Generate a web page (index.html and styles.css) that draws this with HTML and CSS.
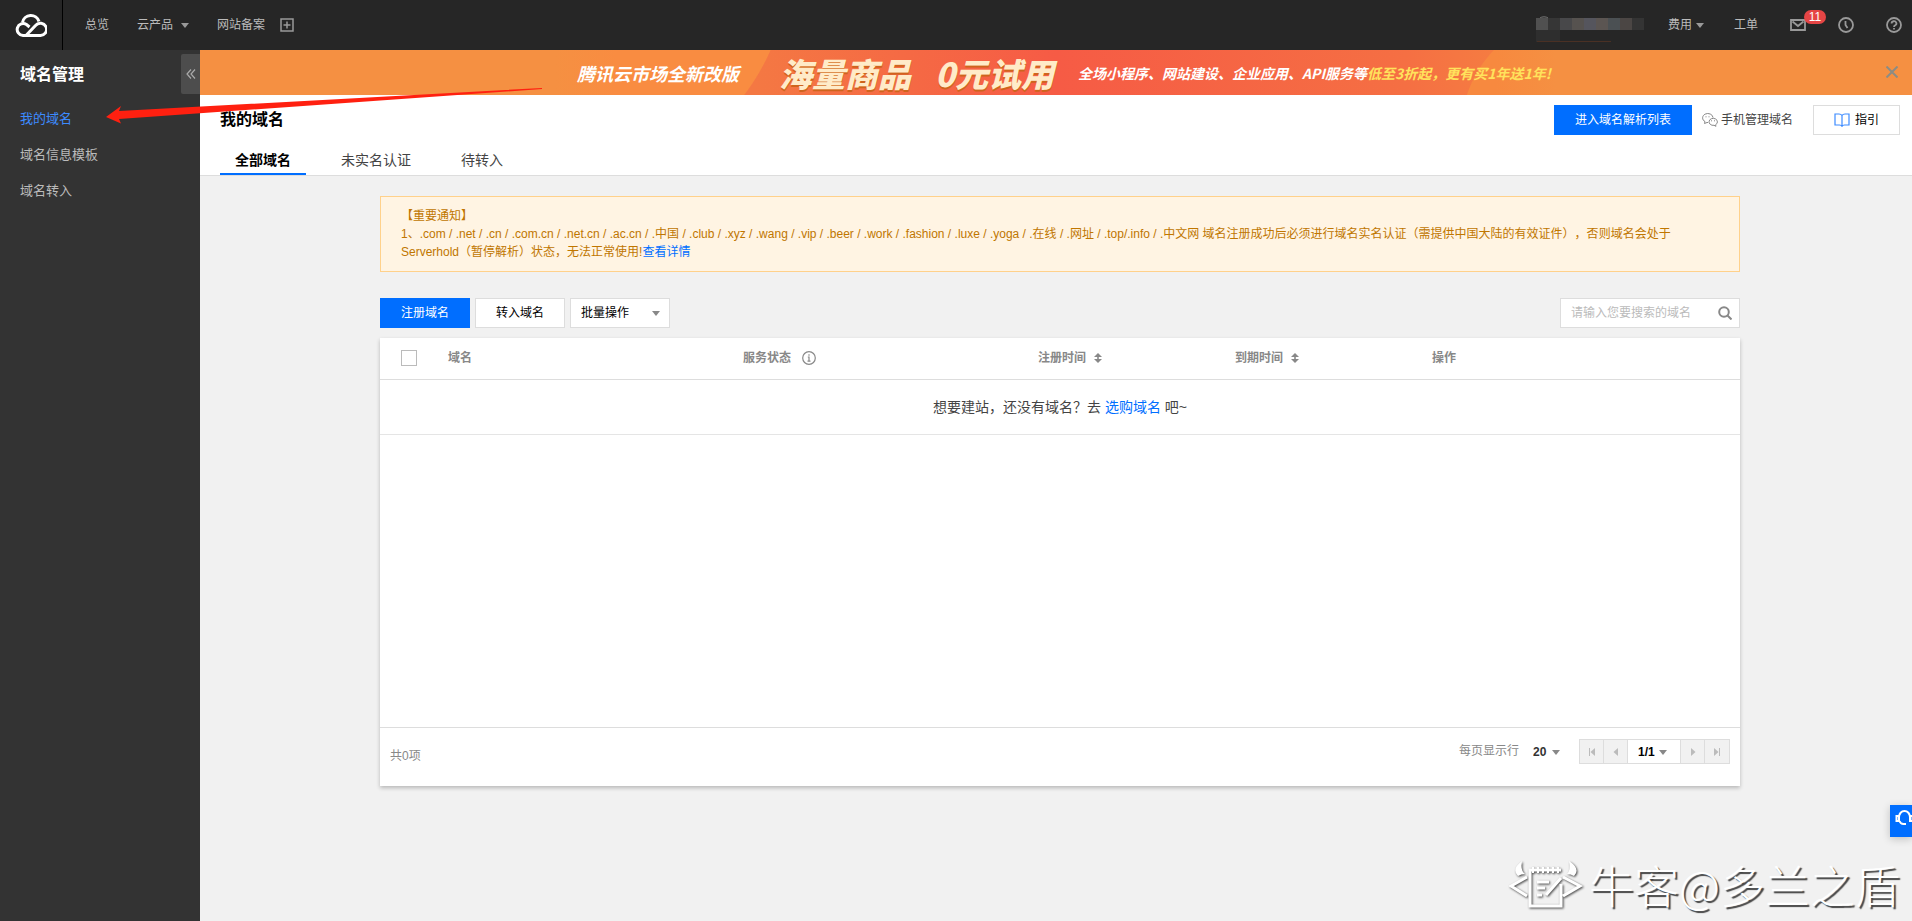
FILE: index.html
```html
<!DOCTYPE html>
<html lang="zh-CN">
<head>
<meta charset="utf-8">
<title>我的域名</title>
<link rel="stylesheet" href="styles.css">
</head>
<body>
<header class="topbar">
  <a class="logo" href="#" aria-label="腾讯云">
    <svg width="32" height="26" viewBox="0 0 32 26" fill="none" stroke="#fff" stroke-width="3"><path d="M11 23.500L20.500 13.500A6.200 6.200 0 1 1 24.500 23.500H8A6 6 0 1 1 11.500 12.500L14.500 15"/><path d="M7.500 10.500A8.500 8.500 0 0 1 24 9.500"/></svg>
  </a>
  <nav class="topnav">
    <a href="#">总览</a>
    <a href="#">云产品<span class="caret"></span></a>
    <a href="#">网站备案</a>
    <button class="icon-btn" aria-label="添加"><svg width="14" height="14" viewBox="0 0 14 14" fill="none" stroke="#999" stroke-width="1.500"><path d="M1 1h12v12H1zM7 3.500v7M3.500 7h7"/></svg></button>
  </nav>
  <div class="account">
    <svg class="user" width="108" height="26" viewBox="0 0 108 26"><path d="M4 2a5 3 0 0 1 8 0" fill="none" stroke="#777"/><path fill="#505050" d="M0 2h12v12H0z"/><path fill="#363636" d="M12 2h12v12H12z"/><path fill="#48484a" d="M24 2h12v12H24z"/><path fill="#56524f" d="M36 2h12v12H36z"/><path fill="#55555d" d="M48 2h12v12H48z"/><path fill="#5b5552" d="M60 2h12v12H60z"/><path fill="#4b5053" d="M72 2h12v12H72z"/><path fill="#4b4644" d="M84 2h12v12H84z"/><path fill="#343434" d="M96 2h12v12H96z"/><path fill="#2e2e2e" d="M0 14h24v12H0z"/><path d="M1 25.500h74" stroke="#4a3024"/></svg>
    <a class="fee" href="#">费用<span class="caret"></span></a>
    <a class="ticket" href="#">工单</a>
    <button class="icon-btn mail" aria-label="消息"><svg width="16" height="12" viewBox="0 0 16 12" fill="none" stroke="#999" stroke-width="1.800"><path d="M1 1h14v10H1zM2.500 2.500L8 7l5.500-4.500"/></svg><span class="badge">11</span></button>
    <button class="icon-btn" aria-label="历史"><svg width="16" height="16" viewBox="0 0 16 16" fill="none" stroke="#999" stroke-width="1.800"><circle cx="8" cy="8" r="7"/><path d="M7.500 4v4l2 3"/></svg></button>
    <button class="icon-btn" aria-label="帮助"><svg width="16" height="16" viewBox="0 0 16 16" fill="none" stroke="#999" stroke-width="1.800"><circle cx="8" cy="8" r="7"/><path d="M5.600 6.500a2.400 2.200 0 1 1 3.600 1.800Q8 9 8 10M8 11v1.600"/></svg></button>
  </div>
</header>
<div class="body">
  <aside class="sidebar">
    <h2>域名管理</h2>
    <button class="collapse" aria-label="收起"><svg width="10" height="10" viewBox="0 0 10 10" fill="none" stroke="#aaa" stroke-width="1.200"><path d="M5 .5L1 5l4 4.500M9 .5L5 5l4 4.500"/></svg></button>
    <nav>
      <a class="current" href="#">我的域名</a>
      <a href="#">域名信息模板</a>
      <a href="#">域名转入</a>
    </nav>
  </aside>
  <main class="main">
    <section class="banner">
      <div class="banner-art">
        <span class="b-lead">腾讯云市场全新改版</span>
        <strong class="b-big"><span>海量商品</span><span>0元试用</span></strong>
        <span class="b-tail">全场小程序、网站建设、企业应用、API服务等<em>低至3折起，更有买1年送1年!</em></span>
      </div>
      <button class="banner-close" aria-label="关闭"><svg width="12" height="12" viewBox="0 0 12 12" stroke="#8c8c84" stroke-width="2"><path d="M.5.5l11 11M11.500.5l-11 11"/></svg></button>
    </section>
    <section class="page-head">
      <div class="title-row">
        <h1>我的域名</h1>
        <div class="head-actions">
          <button class="btn primary">进入域名解析列表</button>
          <a class="wechat" href="#"><svg width="16" height="14" viewBox="0 0 16 14" fill="none" stroke="#888"><path d="M11 4.600A5.200 4.400 0 1 0 3 8.600L2.500 10.500 5 9.500h1"/><path d="M13.500 11.800A4.200 3.500 0 1 0 12 12.300l2 1z"/><path d="M3.500 3.800h1M6.500 3.800h1M9 7.800h1M12 7.800h1"/></svg>手机管理域名</a>
          <button class="btn guide"><svg width="16" height="14" viewBox="0 0 16 14" fill="none" stroke="#3d8bff" stroke-width="1.200"><path d="M8 2.500Q7 1 5 1H1v11h4.500Q7.500 12 8 13.200 8.500 12 10.500 12H15V1h-4Q9 1 8 2.500zV13"/></svg>指引</button>
        </div>
      </div>
      <nav class="tabs">
        <a class="active" href="#">全部域名</a>
        <a href="#">未实名认证</a>
        <a href="#">待转入</a>
      </nav>
    </section>
    <section class="content">
      <div class="notice">
        <p>【重要通知】</p>
        <p>1、.com / .net / .cn / .com.cn / .net.cn / .ac.cn / .中国 / .club / .xyz / .wang / .vip / .beer / .work / .fashion / .luxe / .yoga / .在线 / .网址 / .top/.info / .中文网 域名注册成功后必须进行域名实名认证（需提供中国大陆的有效证件），否则域名会处于Serverhold（暂停解析）状态，无法正常使用!<a href="#">查看详情</a></p>
      </div>
      <div class="toolbar">
        <button class="btn primary">注册域名</button>
        <button class="btn">转入域名</button>
        <div class="select-wrap"><select class="batch" aria-label="批量操作"><option>批量操作</option></select><span class="caret dark"></span></div>
        <form class="search">
          <input type="text" aria-label="搜索域名" placeholder="请输入您要搜索的域名">
          <button type="button" aria-label="搜索"><svg width="14" height="14" viewBox="0 0 14 14" fill="none" stroke="#888" stroke-width="2"><circle cx="6" cy="6" r="4.800"/><path d="M9.500 9.500l4 4"/></svg></button>
        </form>
      </div>
      <div class="card">
        <div class="card-body">
          <table>
            <colgroup><col class="c-check"><col class="c-name"><col class="c-name"><col class="c-time"><col class="c-time"><col></colgroup>
            <thead><tr>
              <th class="check"><input type="checkbox" aria-label="全选"></th>
              <th>域名</th>
              <th><span class="th">服务状态<svg width="14" height="14" viewBox="0 0 14 14" fill="none" stroke="#888" stroke-width="1.200"><circle cx="7" cy="7" r="6.300"/><path d="M7 3.200v1.500M5.800 6H7v4M5.500 10.200h3"/></svg></span></th>
              <th><span class="th">注册时间<svg width="8" height="10" viewBox="0 0 8 10" fill="#888"><path d="M4 0l4 4H0zM4 10L0 6h8zM3.200 3h1.600v4H3.200z"/></svg></span></th>
              <th><span class="th">到期时间<svg width="8" height="10" viewBox="0 0 8 10" fill="#888"><path d="M4 0l4 4H0zM4 10L0 6h8zM3.200 3h1.600v4H3.200z"/></svg></span></th>
              <th>操作</th>
            </tr></thead>
            <tbody><tr><td class="empty" colspan="6">想要建站，还没有域名？去 <a href="#">选购域名</a> 吧~</td></tr></tbody>
          </table>
        </div>
        <footer class="card-foot">
          <span class="total">共0项</span>
          <label for="size">每页显示行</label>
          <div class="select-wrap size"><select id="size"><option>20</option></select><span class="caret dark"></span></div>
          <div class="pager">
            <button disabled aria-label="首页"><svg width="8" height="8" viewBox="0 0 8 8" fill="#bbb"><path d="M1 0h1v8H1zM7 0v8L2.500 4z"/></svg></button>
            <button disabled aria-label="上一页"><svg width="8" height="8" viewBox="0 0 8 8" fill="#bbb"><path d="M6 0v8L1.500 4z"/></svg></button>
            <div class="select-wrap page"><select aria-label="页码"><option>1/1</option></select><span class="caret dark"></span></div>
            <button disabled aria-label="下一页"><svg width="8" height="8" viewBox="0 0 8 8" fill="#bbb"><path d="M2 0v8l4.500-4z"/></svg></button>
            <button disabled aria-label="末页"><svg width="8" height="8" viewBox="0 0 8 8" fill="#bbb"><path d="M6 0h1v8H6zM1 0v8l4.500-4z"/></svg></button>
          </div>
        </footer>
      </div>
    </section>
  </main>
</div>
<svg class="arrow" width="440" height="40" viewBox="0 0 440 40" fill="#ff2010"><path d="M0 29L15 18l-2 5L436 0v1L13 31l2 4.500z"/></svg>
<button class="support" aria-label="在线客服"><svg width="22" height="20" viewBox="0 0 22 20" fill="none" stroke="#fff" stroke-width="2"><path d="M4 12V8a5.500 6 0 0 1 11 0v4M4 7H1.500v5H4zM15 7h2.500v5H15zM4.500 12q1 3 4 3H11"/></svg></button>
<div class="watermark">
  <svg width="74" height="50" viewBox="0 0 74 50" fill="none" stroke="#fff" stroke-width="3"><path d="M18 17L2 26l16 10M54 17l17 9-17 10M52 24v22H21V10h31"/><path d="M24 7v6M29 7v6M34 7v6M39 7v6M44 7v6M49 7v6" stroke-width="2"/><path d="M28 22h12M28 28h8M28 35h5M52 18L37 35"/><path d="M13 1Q2 9 9 16q3-2 7-2-5-4-3-13zM60 1q12 8 5 15-3-2-7-2 4-4 2-13z" fill="#fff" stroke="none"/></svg>
  <span>牛客@多兰之盾</span>
</div>
</body>
</html>
```

FILE: styles.css
```css
* { box-sizing: border-box; }
body {
  margin: 0;
  min-height: 100vh;
  display: flex;
  flex-direction: column;
  position: relative;
  overflow-x: hidden;
  background: #f1f1f1;
  color: #444;
  font: 12px/18px "Liberation Sans", "Noto Sans CJK SC", sans-serif;
  text-spacing-trim: space-all;
}
h1, h2, p { margin: 0; }
h1, h2 { font-size: 16px; line-height: 24px; }
a { color: #006eff; text-decoration: none; }
button, input, select { font: inherit; color: inherit; margin: 0; }
button { cursor: pointer; }
svg { display: block; flex: none; }

.caret {
  display: inline-block;
  flex: none;
  border: 4px solid transparent;
  border-top: 5px solid #999;
  border-bottom: 0;
}
.caret.dark { border-top-color: #888; }

.topbar { display: flex; height: 50px; background: #262626; }
.logo {
  width: 63px;
  display: flex;
  align-items: center;
  padding-left: 15px;
  border-right: 1px solid #000;
}
.topnav, .account { display: flex; align-items: center; }
.topnav { gap: 28px; padding-left: 22px; }
.topnav a, .account a { display: flex; align-items: center; gap: 8px; color: #bbb; }
.topnav .icon-btn { margin-left: -13px; }
.icon-btn { padding: 0; border: 0; background: none; }
.account { margin-left: auto; padding-right: 10px; gap: 32px; }
.account .fee { margin-left: -8px; gap: 4px; }
.account .ticket { margin-left: -2px; }
.user { margin-top: 7px; }
.mail { position: relative; }
.badge {
  position: absolute;
  left: 14px;
  top: -9px;
  width: 22px;
  border-radius: 7px;
  background: #e54545;
  color: #fff;
  line-height: 14px;
}

.body { flex: 1; display: flex; }
.sidebar { position: relative; width: 200px; flex: none; padding-top: 13px; background: #333; color: #fff; }
.sidebar h2 { padding-left: 20px; }
.sidebar nav { margin-top: 14px; }
.sidebar nav a { display: block; padding-left: 20px; font-size: 13px; line-height: 36px; color: #bbb; }
.sidebar nav .current { color: #3d8bff; }
.collapse {
  position: absolute;
  right: 0;
  top: 4px;
  width: 19px;
  height: 40px;
  display: flex;
  align-items: center;
  justify-content: center;
  padding: 0;
  border: 0;
  border-radius: 2px 0 0 2px;
  background: #4d4d4d;
}

.main { flex: 1; min-width: 0; }
.banner { position: relative; display: flex; justify-content: center; height: 45px; background: #f59042; }
.banner-art {
  display: flex;
  align-items: center;
  width: 1000px;
  padding-left: 21px;
  color: #fff;
  font-family: "Noto Sans CJK SC", sans-serif;
  font-style: italic;
  font-weight: bold;
  white-space: nowrap;
  background:
    linear-gradient(90deg, #f59042, transparent 60px, transparent 940px, #f59042),
    radial-gradient(circle at 10px -90px, #f98c41 223px, transparent 224px),
    radial-gradient(circle at 1020px 80px, #f7893f 114px, transparent 115px),
    linear-gradient(90deg, #f47843 200px, #f65b45 500px, #f56f43 850px, #f58540);
}
.b-lead { font-size: 18px; }
.b-big {
  display: flex;
  gap: 24px;
  margin: 0 24px 0 40px;
  font-size: 33px;
  line-height: 44px;
  color: #ffebc8;
  text-shadow: 0 2px 0 #cf641d;
}
.b-tail { font-size: 14px; }
.b-tail em { color: #ffe25c; }
.banner-close { position: absolute; right: 14px; top: 16px; padding: 0; border: 0; background: none; }

.page-head { padding: 10px 12px 0 20px; background: #fff; border-bottom: 1px solid #ddd; }
.title-row { display: flex; justify-content: space-between; height: 30px; }
.page-head h1 { padding-top: 3px; color: #000; }
.head-actions { display: flex; align-items: center; }
.wechat { display: flex; align-items: center; gap: 3px; margin: 0 20px 0 10px; color: #444; }
.btn {
  display: flex;
  align-items: center;
  justify-content: center;
  height: 30px;
  padding: 0 20px;
  border: 1px solid #ddd;
  background: #fff;
  color: #000;
}
.btn.primary { border-color: #006eff; background: #006eff; color: #fff; }
.guide { gap: 5px; }
.tabs { display: flex; gap: 20px; }
.tabs a { padding: 13px 15px 1px; border-bottom: 2px solid transparent; font-size: 14px; line-height: 24px; color: #444; }
.tabs .active { color: #000; font-weight: bold; border-color: #006eff; }

.content { max-width: 1376px; margin: 0 auto; padding: 20px 4px 0 12px; }
.notice { padding: 10px 20px; border: 1px solid #ffd18b; background: #fff4e3; color: #c07600; }
.toolbar { display: flex; gap: 5px; margin: 26px 0 10px; }
.select-wrap { position: relative; display: flex; }
.select-wrap select { appearance: none; border: 0; background: none; width: 100%; }
.select-wrap .caret { position: absolute; right: 10px; top: 50%; margin-top: -2px; pointer-events: none; }
.select-wrap .batch { width: 100px; padding: 0 10px; border: 1px solid #ddd; background: #fff; color: #000; border-radius: 0; }
.search { display: flex; width: 180px; margin-left: auto; border: 1px solid #ddd; background: #fff; }
.search input { flex: 1; min-width: 0; padding: 0 0 0 10px; border: 0; background: none; }
.search input::placeholder { color: #bbb; }
.search button { padding: 0 7px; border: 0; background: none; }

.card { background: #fff; box-shadow: 0 2px 4px rgba(0, 0, 0, .24); }
.card-body { min-height: 390px; border-bottom: 1px solid #ddd; }
table { width: 100%; table-layout: fixed; border-collapse: collapse; }
.c-check { width: 58px; }
.c-name { width: 295px; }
.c-time { width: 197px; }
th { height: 41px; padding: 0 10px; border-bottom: 1px solid #ddd; color: #888; text-align: left; }
th.check { padding-left: 21px; }
.check input { display: block; appearance: none; width: 16px; height: 16px; border: 1px solid #bbb; background: #fff; }
.th { display: flex; align-items: center; gap: 8px; }
.th svg[width="14"] { margin-left: 3px; }
.empty { height: 55px; padding: 0; border-bottom: 1px solid #e5e5e5; text-align: center; font-size: 14px; }
.card-foot { display: flex; align-items: flex-start; padding: 11px 10px 21px; color: #888; }
.total { margin: 8px auto 0 0; }
.card-foot label { margin: 3px 14px 0 0; }
.size { width: 27px; height: 25px; margin-right: 19px; color: #333; font-weight: bold; }
.size select { padding: 0; }
.size .caret { right: 0; }
.pager { display: flex; height: 25px; border: 1px solid #ddd; }
.pager button { width: 24px; display: flex; align-items: center; justify-content: center; padding: 0; border: 0; background: #f1f1f1; border-right: 1px solid #ddd; }
.pager button:last-child { border-right: 0; }
.page { width: 53px; border-right: 1px solid #ddd; color: #000; font-weight: bold; }
.page select { padding: 0 0 0 10px; }
.page .caret { right: 13px; }

.arrow { position: absolute; left: 106px; top: 88px; pointer-events: none; }
.support {
  position: absolute;
  right: 0;
  top: 805px;
  width: 22px;
  height: 32px;
  padding: 0 0 4px 5px;
  overflow: hidden;
  border: 0;
  background: #006eff;
  box-shadow: 0 2px 8px rgba(0, 0, 0, .2);
}
.watermark {
  position: absolute;
  right: 12px;
  bottom: 4px;
  display: flex;
  align-items: center;
  gap: 6px;
  height: 64px;
  color: #fff;
  font: 300 45px/64px "Noto Sans CJK SC", sans-serif;
  text-shadow: 2px 2px 1px #444;
  pointer-events: none;
}
.watermark svg { filter: drop-shadow(1px 1px 1px #444); }
```
